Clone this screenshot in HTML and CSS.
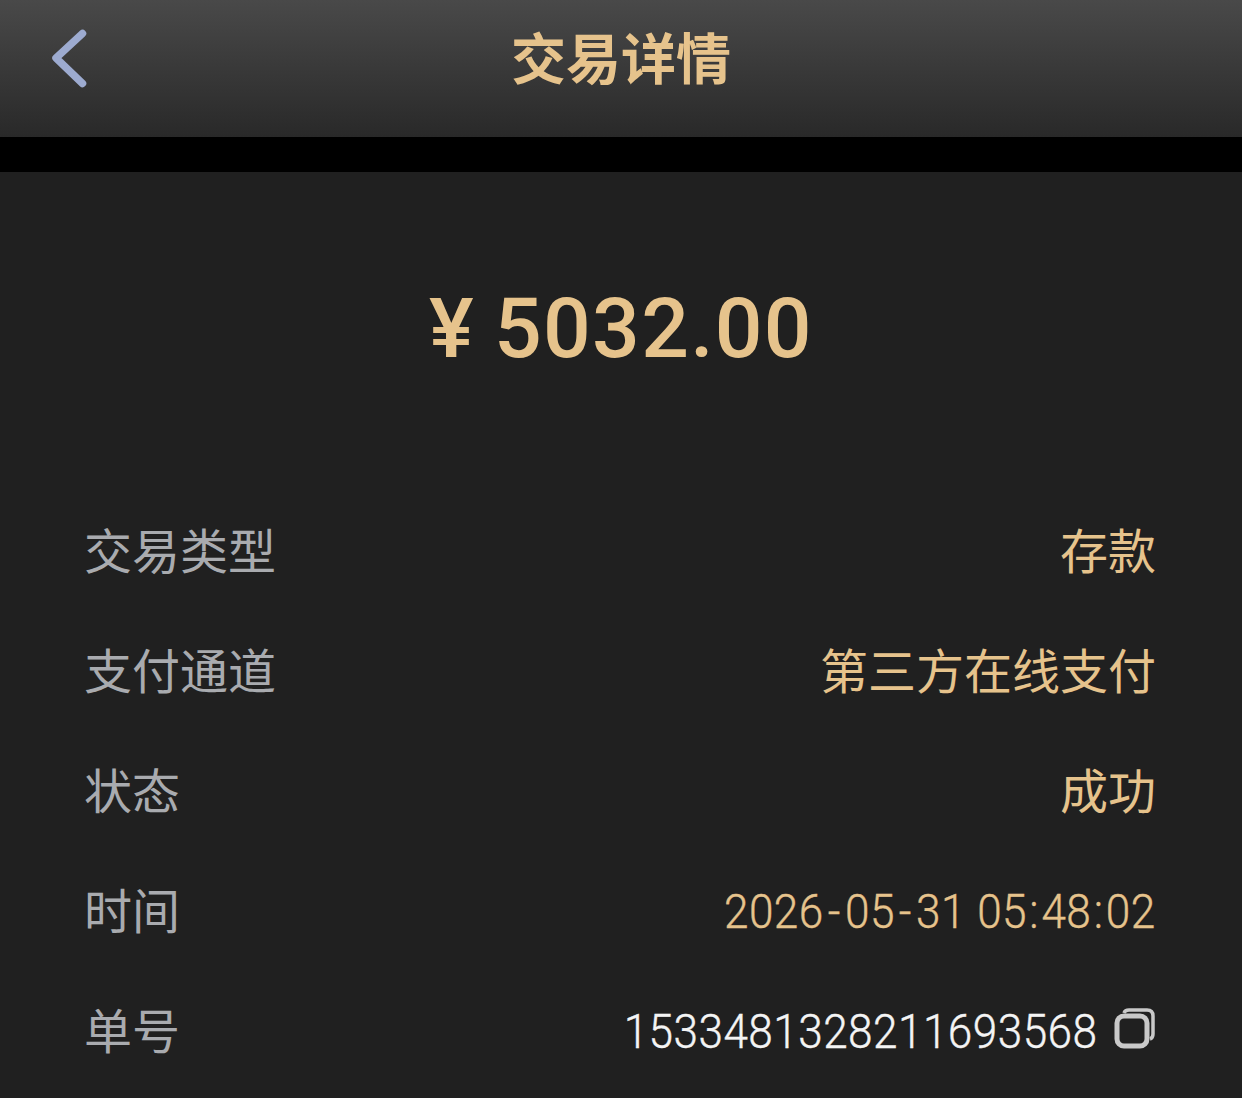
FILE: index.html
```html
<!DOCTYPE html>
<html lang="zh">
	<head>
		<meta charset="utf-8">
		<title>交易详情</title>
		<link rel="stylesheet" href="styles.css">
	</head>
	<body>
		<header class="topbar">
			<svg class="back" width="36" height="62" viewBox="0 0 36 62">
				<path d="M31.5 6.5 L5 31 L31.5 56.5" fill="none" stroke="#9dabd0" stroke-width="7.5" stroke-linecap="round" stroke-linejoin="round"/>
			</svg>
			<h1 class="title">交易详情</h1>
		</header>
		<div class="gap"></div>
		<main class="content">
			<div class="amount"><span class="yen">¥</span>5032.00</div>
			<div class="rows">
				<div class="row"><span class="label">交易类型</span><span class="value">存款</span></div>
				<div class="row"><span class="label">支付通道</span><span class="value">第三方在线支付</span></div>
				<div class="row"><span class="label">状态</span><span class="value">成功</span></div>
				<div class="row">
					<span class="label">时间</span>
					<span class="value num">2026<span class="dash">-</span>05<span class="dash">-</span>31 05<span class="colon">:</span>48<span class="colon">:</span>02</span>
				</div>
				<div class="row">
					<span class="label">单号</span>
					<span class="order">
						<span class="value num white">1533481328211693568</span>
						<svg class="copy" width="42" height="42" viewBox="0 0 42 42">
							<path d="M10 6 Q11 3 15 3 H33 Q39 3 39 9 V27 Q39 31 36 32" fill="none" stroke="#c9c9c9" stroke-width="3.5"/>
							<rect x="3" y="9" width="30" height="30" rx="7" fill="#202020" stroke="#c9c9c9" stroke-width="5"/>
						</svg>
					</span>
				</div>
			</div>
		</main>
	</body>
</html>
```
FILE: styles.css
```css
html, body {
	margin: 0;
	padding: 0;
}

body {
	background-color: #202020;
	font-family: "Noto Sans CJK SC", sans-serif;
	height: 1098px;
	overflow: hidden;
}

/* top bar */
.topbar {
	position: relative;
	height: 137px;
	background: linear-gradient(#494949, #292929);
	display: flex;
	justify-content: center;
}

.back {
	position: absolute;
	left: 51px;
	top: 27px;
}

.title {
	margin: 0;
	font-size: 55px;
	font-weight: 700;
	color: #e6c38c;
	line-height: 110px;
}

.gap {
	height: 35px;
	background-color: #000;
}

/* amount */
.amount {
	margin-top: 107px;
	height: 100px;
	line-height: 100px;
	text-align: center;
	font-family: Roboto, sans-serif;
	font-size: 84px;
	font-weight: 500;
	letter-spacing: 1.3px;
	color: #e6c38c;
}

.yen {
	margin-right: 19px;
}

/* detail rows */
.rows {
	margin-top: 109px;
	padding: 0 86px 0 84px;
}

.row {
	height: 120px;
	display: flex;
	align-items: center;
	justify-content: space-between;
	font-size: 48px;
}

.label {
	color: #a9abaf;
}

.value {
	color: #e6c38c;
}

/* digits in the shot are narrower than Roboto */
.num {
	display: inline-block;
	font-family: Roboto, sans-serif;
	font-size: 49px;
	font-weight: 300;
	letter-spacing: 0.53px;
	white-space: nowrap;
	padding-top: 7px;
	-webkit-text-stroke: 0.4px;
	transform: scaleX(0.9);
	transform-origin: right center;
}

.dash {
	padding: 0 4.5px;
}

.colon {
	padding: 0 2.6px;
}

.white {
	color: #f4f4f4;
}

.order {
	display: flex;
	align-items: center;
}

.copy {
	margin-left: 17px;
}
```
